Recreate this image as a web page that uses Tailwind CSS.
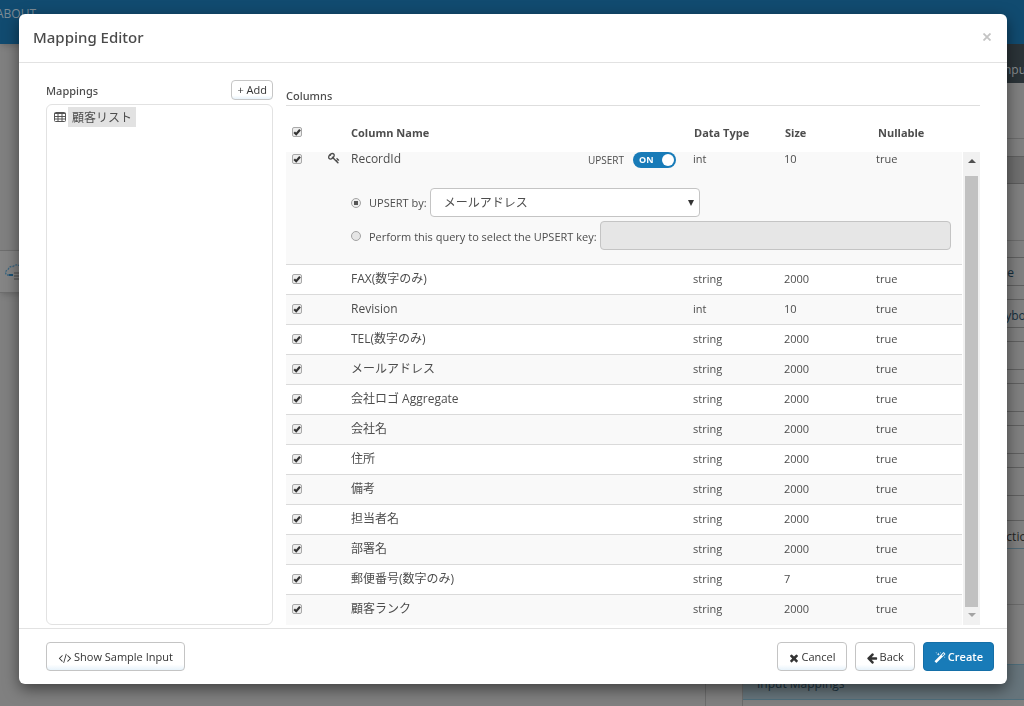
<!DOCTYPE html>
<html lang="ja">
<head>
<meta charset="utf-8">
<title>Mapping Editor</title>
<script src="https://cdn.jsdelivr.net/npm/@tailwindcss/browser@4"></script>
</head>
<body class="bg-[#808080] font-['Open_Sans','Noto_Sans_CJK_JP',sans-serif] text-[11px] text-[#4d4d4d]">

<svg class="hidden">
  <symbol id="check" viewBox="0 0 10 10"><path d="M2.2 5.2 4.2 7.2 8 2.8" fill="none" stroke="#333" stroke-width="2.2"/></symbol>
</svg>

<!-- Dimmed page below the dialog -->
<div class="flex h-screen flex-col overflow-hidden" aria-hidden="true">
  <header class="flex h-11 shrink-0 items-start bg-[#114b70] pt-1.5 shadow-md"><span class="-ml-1 text-xs text-[#7d8c96]">ABOUT</span></header>
  <div class="flex grow">
    <div class="flex grow flex-col border-r border-[#6c6c6c] pt-[206px]">
      <div class="flex h-[43px] items-center border-y border-[#6e6e6e] bg-[#858585] pl-1 shadow-md">
        <svg class="h-5 w-6" viewBox="0 0 24 20" fill="none"><path d="M5 13H2.500Q0 9 4 8Q5 4 9 4.500Q13 1 17 5Q22 5 22 10" stroke="#3b6680" stroke-width="1.300" stroke-dasharray="2 1"/><path d="M5 13h4" stroke="#1d5274" stroke-width="2"/><path d="M10 11h10M10 14h10M10 17h10" stroke="#686868" stroke-width="2"/></svg>
      </div>
    </div>
    <div class="w-9"></div>
    <div class="flex w-[282px] flex-col border-l border-[#6c6c6c] text-xs text-[#252525]">
      <div class="flex h-[39px] shrink-0 items-center justify-end overflow-hidden bg-[#2b3338] pt-3 text-[#8a8f92]"><span class="-mr-3">Inputs</span></div>
      <div class="h-[56px] shrink-0 border-b border-[#6c6c6c]"></div>
      <div class="h-[18px] shrink-0 border-b border-[#606060]"></div>
      <div class="h-[27px] shrink-0 border-b border-[#5c5c5c] bg-[#6f6f6f]"></div>
      <div class="h-[57px] shrink-0 border-b border-[#6c6c6c]"></div>
      <div class="mt-4 flex shrink-0 flex-col gap-[13px]">
        <div class="flex h-[29px] items-center justify-end border-y border-[#606060] pt-0.5 pr-2.5 text-[#16303f]">Table</div>
        <div class="flex h-[29px] items-center justify-end overflow-hidden border-y border-[#606060] pt-1 text-[#16303f]"><span class="-mr-2">citybox</span></div>
        <div class="h-[29px] border-y border-[#606060]"></div>
        <div class="h-[29px] border-y border-[#606060]"></div>
        <div class="h-[29px] border-y border-[#606060]"></div>
        <div class="h-[29px] border-y border-[#606060]"></div>
      </div>
      <div class="mt-6 flex h-[29px] shrink-0 items-center justify-end overflow-hidden border-t border-b border-t-[#606060] border-b-[#526a76] pt-1"><span class="-mr-2.5">Action</span></div>
      <div class="h-14 shrink-0 border-b border-[#6c6c6c]"></div>
      <div class="mt-[59px] flex h-9 shrink-0 items-center border-y border-[#4f6e7b] bg-[#67757c] pt-1 pl-3.5 text-[#1d3441]">Input Mappings</div>
    </div>
  </div>
</div>

<div class="fixed inset-0 pt-3.5 pr-[17px] pl-[19px]">
  <section role="dialog" aria-labelledby="dialog-title" class="rounded-md bg-white shadow-[0_5px_15px_rgba(0,0,0,0.5)]">
    <header class="flex h-[49px] items-center justify-between border-b border-[#e2e2e2] px-3.5 pb-0.5">
      <h1 id="dialog-title" class="font-['Noto_Sans',sans-serif] text-[15px] font-medium text-[#4a4a4a]">Mapping Editor</h1>
      <button type="button" aria-label="Close" class="p-0.5"><svg class="size-2" viewBox="0 0 8 8"><path d="M0.500 0.500 7.500 7.500M7.500 0.500 0.500 7.500" stroke="#c4c4c4" stroke-width="1.800"/></svg></button>
    </header>

    <div class="flex gap-[13px] pr-[27px] pb-[3px] pl-[27px] pt-[17px]">
      <div class="flex w-[227px] shrink-0 flex-col">
        <div class="mb-1 flex items-center justify-between">
          <h2 class="pt-0.5 font-['Noto_Sans',sans-serif] font-medium">Mappings</h2>
          <button type="button" class="h-5 rounded-sm border border-[#c6c6c6] bg-linear-to-b from-white from-80% to-[#e8f3fb] px-[5px] leading-4 text-[#333]">+ Add</button>
        </div>
        <ul class="grow rounded-md border border-[#e2e2e2] px-1.5 py-0.5">
          <li class="flex items-center gap-px">
            <svg class="mx-px size-3" viewBox="0 0 12 12" fill="none" stroke="#555"><rect x="0.500" y="1.500" width="11" height="9" rx="1"/><path d="M0.500 2.500h11M0.500 5.500h11M0.500 8h11M4 2v8.500M8 2v8.500"/></svg>
            <a href="#" class="h-5 bg-[#e2e2e2] px-1 pt-px text-xs leading-5">顧客リスト</a>
          </li>
        </ul>
      </div>

      <div class="min-w-0 grow">
        <h2 class="h-[26px] border-b border-[#dedede] pt-2 font-['Noto_Sans',sans-serif] font-medium">Columns</h2>
        <div class="flex gap-px">
          <table class="min-w-0 grow table-fixed border-collapse text-left leading-4">
            <colgroup><col class="w-[42px]"><col class="w-[23px]"><col><col class="w-[91px]"><col class="w-[92px]"><col class="w-[86px]"></colgroup>
            <thead>
              <tr class="h-[46px] align-middle">
                <th class="pt-1.5 pl-1.5"><span class="grid size-2.5"><input type="checkbox" checked aria-label="Select all columns" class="col-start-1 row-start-1 size-2.5 appearance-none rounded-xs border border-[#a9a9a9] bg-[#ededed]"><svg class="pointer-events-none col-start-1 row-start-1 size-2.5"><use href="#check"/></svg></span></th>
                <th></th>
                <th class="pt-2 font-bold">Column Name</th>
                <th class="pt-2 pl-px font-bold">Data Type</th>
                <th class="pt-2 pl-px font-bold">Size</th>
                <th class="pt-2 pl-0.5 font-bold">Nullable</th>
              </tr>
            </thead>
            <tbody id="rows">
              <tr class="h-6 bg-[#f9f9f9] align-top">
                <td class="pt-0.5 pl-1.5"><span class="grid size-2.5"><input type="checkbox" checked aria-label="RecordId" class="col-start-1 row-start-1 size-2.5 appearance-none rounded-xs border border-[#a9a9a9] bg-[#ededed]"><svg class="pointer-events-none col-start-1 row-start-1 size-2.5"><use href="#check"/></svg></span></td>
                <td><svg class="size-3" viewBox="0 0 1792 1792" fill="#4d4d4d"><path d="M832 512q0-80-56-136t-136-56-136 56-56 136q0 42 19 83-41-19-83-19-80 0-136 56t-56 136 56 136 136 56 136-56 56-136q0-42-19-83 41 19 83 19 80 0 136-56t56-136zm851 704q0 17-49 66t-66 49q-9 0-28.500-16t-36.500-33-38.500-40-24.500-26l-96 96 220 220q28 28 28 68 0 42-39 81t-81 39q-40 0-68-28l-671-671q-176 131-365 131-163 0-265.500-102.500t-102.500-265.500q0-160 95-313t248-248 313-95q163 0 265.500 102.500t102.500 265.500q0 189-131 365l355 355 96-96q-3-3-26-24.500t-40-38.500-33-36.500-16-28.500q0-17 49-66t66-49q13 0 23 10 6 6 46 44.500t82 79.500 86.500 86 73 78 28.500 41z"/></svg></td>
                <td><div class="flex items-center justify-between pr-[17px]"><span class="-mt-0.5 text-xs leading-4">RecordId</span><span class="flex items-center gap-[9px] text-[10px]">UPSERT<button type="button" role="switch" aria-checked="true" aria-label="Upsert" class="flex h-4 w-[43px] items-center justify-between rounded-full bg-[#187bb8] pr-0.5 pl-1.5 text-[9px] font-bold text-white">ON<span class="size-3 rounded-full bg-white"></span></button></span></div></td>
                <td class="leading-[14px]">int</td><td class="leading-[14px]">10</td><td class="leading-[14px]">true</td>
              </tr>
              <tr class="border-b border-[#dadada] bg-[#f9f9f9]">
                <td></td><td></td>
                <td colspan="4" class="pt-3 pr-[11px] pb-3.5">
                  <div class="flex flex-col gap-1">
                    <div class="flex items-center">
                      <input type="radio" name="upsert" id="by-column" checked class="size-2.5 appearance-none rounded-full border border-[#a3a3a3] bg-radial from-[#555] from-40% to-[#eeeeee] to-45%">
                      <label for="by-column" class="mr-[3px] ml-2">UPSERT by:</label>
                      <div class="grid w-[270px] items-center">
                        <select aria-label="Upsert column" class="col-start-1 row-start-1 h-[29px] appearance-none rounded-sm border border-[#c4c4c4] bg-white px-[13px] text-xs"><option>メールアドレス</option></select>
                        <svg class="pointer-events-none col-start-1 row-start-1 mr-1.5 size-1.5 justify-self-end" viewBox="0 0 6 6"><path d="M0 0h6L3 6z" fill="#333"/></svg>
                      </div>
                    </div>
                    <div class="flex items-center">
                      <input type="radio" name="upsert" id="by-query" class="size-2.5 appearance-none rounded-full border border-[#a3a3a3] bg-[#e6e6e6]">
                      <label for="by-query" class="mr-[3px] ml-2 pt-0.5 whitespace-nowrap">Perform this query to select the UPSERT key:</label>
                      <input type="text" disabled aria-label="Upsert key query" class="h-[29px] min-w-0 grow rounded-sm border border-[#c4c4c4] bg-[#e6e6e6] px-2">
                    </div>
                  </div>
                </td>
              </tr>
            </tbody>
          </table>
          <div class="flex w-[17px] flex-col pt-[46px]">
            <div class="flex grow flex-col items-center bg-[#f1f1f1]">
              <svg class="mt-[5px] mb-[11px] h-2 w-2" viewBox="0 0 8 8"><path d="M0 6h8L4 2z" fill="#505050"/></svg>
              <div class="w-[13px] grow bg-[#c1c1c1]"></div>
              <svg class="mt-1 mb-1.5 h-2 w-2" viewBox="0 0 8 8"><path d="M0 2h8L4 6z" fill="#a3a3a3"/></svg>
            </div>
          </div>
        </div>
      </div>
    </div>

    <footer class="flex items-center gap-2 border-t border-[#e2e2e2] pt-[13px] pr-[13px] pb-[13px] pl-[27px] text-[#333]">
      <button type="button" class="mr-auto flex h-[29px] items-center gap-0.5 rounded-sm border border-[#c4c4c4] bg-linear-to-b from-white from-80% to-[#e8f3fb] px-[11px] pt-[3px]"><svg class="h-3 w-3.5" viewBox="-60 0 1920 1792" fill="#333"><path d="M553 1399l-50 50q-10 10-23 10t-23-10l-466-466q-10-10-10-23t10-23l466-466q10-10 23-10t23 10l50 50q10 10 10 23t-10 23l-393 393 393 393q10 10 10 23t-10 23zm591-1067l-373 1291q-4 13-15.500 19.500t-23.500 2.500l-62-17q-13-4-19.500-15.500t-2.500-24.500l373-1291q4-13 15.500-19.500t23.500-2.500l62 17q13 4 19.500 15.500t2.500 24.500zm657 651l-466 466q-10 10-23 10t-23-10l-50-50q-10-10-10-23t10-23l393-393-393-393q-10-10-10-23t10-23l50-50q10-10 23-10t23 10l466 466q10 10 10 23t-10 23z"/></svg>Show Sample Input</button>
      <button type="button" class="flex h-[29px] items-center gap-0.5 rounded-sm border border-[#c4c4c4] bg-linear-to-b from-white from-80% to-[#e8f3fb] px-2.5 pt-[3px]"><svg class="size-3" viewBox="0 0 1792 1792" fill="#333"><path d="M1490 1322q0 40-28 68l-136 136q-28 28-68 28t-68-28l-294-294-294 294q-28 28-68 28t-68-28l-136-136q-28-28-28-68t28-68l294-294-294-294q-28-28-28-68t28-68l136-136q28-28 68-28t68 28l294 294 294-294q28-28 68-28t68 28l136 136q28 28 28 68t-28 68l-294 294 294 294q28 28 28 68z"/></svg>Cancel</button>
      <button type="button" class="flex h-[29px] items-center gap-0.5 rounded-sm border border-[#c4c4c4] bg-linear-to-b from-white from-80% to-[#e8f3fb] px-2.5 pt-[3px]"><svg class="size-3" viewBox="0 0 1792 1792" fill="#333"><path d="M1664 896v128q0 53-32.500 90.500t-84.500 37.500h-704l293 294q38 36 38 90t-38 90l-75 76q-37 37-90 37-52 0-91-37l-651-652q-37-37-37-90 0-52 37-91l651-650q38-38 91-38 52 0 90 38l75 74q38 38 38 91t-38 91l-293 293h704q52 0 84.500 37.500t32.500 90.500z"/></svg>Back</button>
      <button type="button" class="flex h-[29px] items-center gap-0.5 rounded-sm border border-[#146fa8] bg-[#187bb8] px-2.5 pt-[3px] font-semibold text-white"><svg class="size-3" viewBox="0 0 1792 1792" fill="#fff"><path d="M1254 581l293-293-107-107-293 293zm447-293q0 27-18 45l-1286 1286q-18 18-45 18t-45-18l-198-198q-18-18-18-45t18-45l1286-1286q18-18 45-18t45 18l198 198q18 18 18 45zm-1351-190l98 30-98 30-30 98-30-98-98-30 98-30 30-98zm350 162l196 60-196 60-60 196-60-196-196-60 196-60 60-196zm930 478l98 30-98 30-30 98-30-98-98-30 98-30 30-98zm-640-640l98 30-98 30-30 98-30-98-98-30 98-30 30-98z"/></svg>Create</button>
    </footer>
  </section>
</div>

<script>
const columns = [
  ['FAX(数字のみ)', 'string', '2000'], ['Revision', 'int', '10'], ['TEL(数字のみ)', 'string', '2000'],
  ['メールアドレス', 'string', '2000'], ['会社ロゴ Aggregate', 'string', '2000'], ['会社名', 'string', '2000'],
  ['住所', 'string', '2000'], ['備考', 'string', '2000'], ['担当者名', 'string', '2000'],
  ['部署名', 'string', '2000'], ['郵便番号(数字のみ)', 'string', '7'], ['顧客ランク', 'string', '2000']
];
document.getElementById('rows').insertAdjacentHTML('beforeend', columns.map(([name, type, size]) => `
  <tr class="h-[30px] border-b border-[#dadada] align-middle last:border-b-0 even:bg-[#f9f9f9]">
    <td class="pb-0.5 pl-1.5"><span class="grid size-2.5"><input type="checkbox" checked aria-label="${name}" class="col-start-1 row-start-1 size-2.5 appearance-none rounded-xs border border-[#a9a9a9] bg-[#ededed]"><svg class="pointer-events-none col-start-1 row-start-1 size-2.5"><use href="#check"/></svg></span></td>
    <td></td><td class="pb-0.5 text-xs leading-4">${name}</td><td class="pb-px">${type}</td><td class="pb-px">${size}</td><td class="pb-px">true</td>
  </tr>`).join(''));
</script>
</body>
</html>
